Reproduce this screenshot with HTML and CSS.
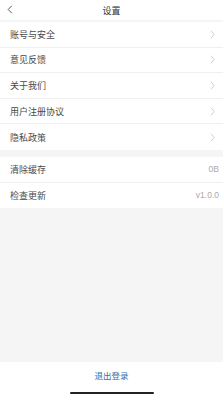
FILE: index.html
```html
<!DOCTYPE html>
<html lang="zh">
<head>
<meta charset="utf-8">
<link rel="stylesheet" href="styles.css">
</head>
<body>
<div class="page">
  <header class="topbar">
    <span class="back"><svg width="6" height="9" viewBox="0 0 6 9"><path d="M4.8 0.8 L1.2 4.5 L4.8 8.2" fill="none" stroke="#444" stroke-width="0.9"/></svg></span>
    <span class="title">设置</span>
  </header>
  <div class="group first">
    <div class="row"><span class="label">账号与安全</span><span class="chev"><svg width="5" height="9" viewBox="0 0 5 9"><path d="M1 0.7 L4.2 4.5 L1 8.3" fill="none" stroke="#c4c4c4" stroke-width="0.8"/></svg></span></div>
    <div class="row"><span class="label">意见反馈</span><span class="chev"><svg width="5" height="9" viewBox="0 0 5 9"><path d="M1 0.7 L4.2 4.5 L1 8.3" fill="none" stroke="#c4c4c4" stroke-width="0.8"/></svg></span></div>
    <div class="row"><span class="label">关于我们</span><span class="chev"><svg width="5" height="9" viewBox="0 0 5 9"><path d="M1 0.7 L4.2 4.5 L1 8.3" fill="none" stroke="#c4c4c4" stroke-width="0.8"/></svg></span></div>
    <div class="row"><span class="label">用户注册协议</span><span class="chev"><svg width="5" height="9" viewBox="0 0 5 9"><path d="M1 0.7 L4.2 4.5 L1 8.3" fill="none" stroke="#c4c4c4" stroke-width="0.8"/></svg></span></div>
    <div class="row"><span class="label">隐私政策</span><span class="chev"><svg width="5" height="9" viewBox="0 0 5 9"><path d="M1 0.7 L4.2 4.5 L1 8.3" fill="none" stroke="#c4c4c4" stroke-width="0.8"/></svg></span></div>
  </div>
  <div class="group second">
    <div class="row"><span class="label">清除缓存</span><span class="value">0B</span></div>
    <div class="row"><span class="label">检查更新</span><span class="value">v1.0.0</span></div>
  </div>
  <div class="spacer"></div>
  <footer class="bottom">
    <span class="logout">退出登录</span>
    <span class="indicator"></span>
  </footer>
</div>
</body>
</html>
```
FILE: styles.css
```css
* { box-sizing: border-box; margin: 0; padding: 0; }
html, body { width: 223px; height: 398px; overflow: hidden; }
body {
  background: #f5f5f5;
  font-family: "Noto Sans CJK SC", "Noto Sans", sans-serif;
  color: #333;
}
.page { display: flex; flex-direction: column; height: 398px; }
.topbar {
  height: 20px;
  background: #fff;
  display: flex;
  align-items: center;
  justify-content: center;
  position: relative;
}
.back { position: absolute; left: 7px; top: 5px; display: flex; }
.title { font-size: 9px; color: #333; line-height: 1; }
.group { background: #fff; display: flex; flex-direction: column; }
.group.first { margin-top: 2px; }
.group.second { margin-top: 7px; }
.row {
  height: 25.6px;
  display: flex;
  align-items: center;
  justify-content: space-between;
  padding: 0 4px 0 10px;
  border-bottom: 0.6px solid #f0f0f0;
}
.row:last-child { border-bottom: none; }
.label { font-size: 9px; color: #4a4a4a; line-height: 1; }
.chev { display: flex; margin-right: 4px; }
.value { font-size: 8.5px; color: #aaa; line-height: 1; font-family: "Liberation Sans", "Noto Sans", sans-serif; }
.spacer { flex: 1; }
.bottom {
  height: 36px;
  background: #fff;
  display: flex;
  flex-direction: column;
  align-items: center;
}
.logout { font-size: 8.5px; color: #3b6ea8; line-height: 1; margin-top: 9px; }
.indicator {
  width: 84px;
  height: 2px;
  border-radius: 1px;
  background: #222;
  margin-top: 12px;
}
```
